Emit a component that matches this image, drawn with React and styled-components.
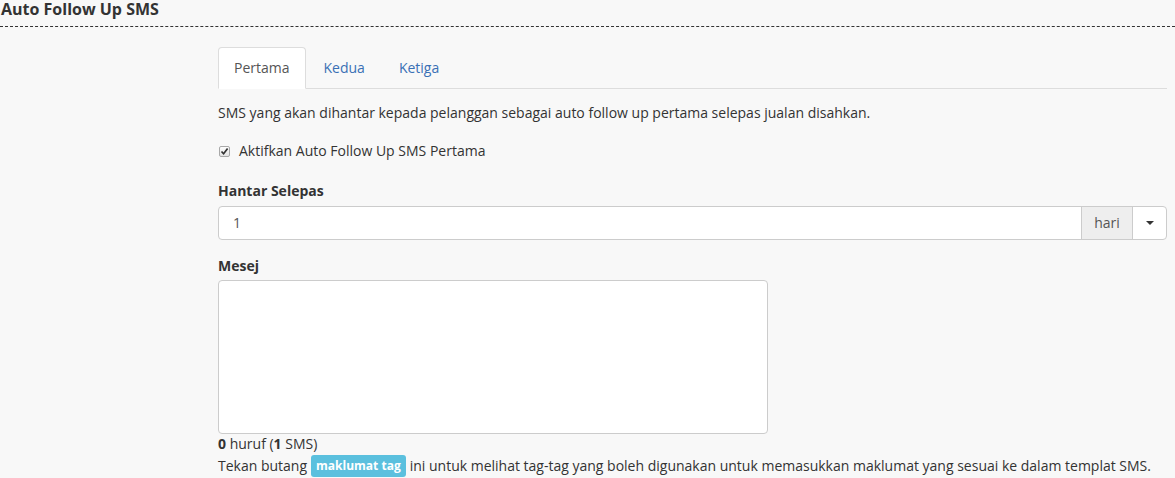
import React from 'react'
import styled, { createGlobalStyle } from 'styled-components';

const GlobalStyle = createGlobalStyle`
html, body {
  margin: 0;
  padding: 0;
  background: #f8f8f8;
}
body {
  font-family: "Open Sans", "Liberation Sans", sans-serif;
  font-size: 14px;
  color: #333;
  line-height: 20px;
}
* { box-sizing: border-box; }
`;

const Page = styled('div')`
width: 1175px;
height: 478px;
overflow: hidden;
`;

const Heading = styled('h3')`
margin: 0;
height: 27px;
padding: 0 0 0 1px;
font-size: 16px;
font-weight: 700;
line-height: 18px;
color: #333;
border-bottom: 1px dashed #333;
`;

const Body = styled('div')`
display: grid;
grid-template-columns: 218px 1fr;
padding-right: 8px;
padding-top: 20px;
`;

const Column = styled('div')`
grid-column: 2;
display: flex;
flex-direction: column;
`;

const Tabs = styled('ul')`
display: flex;
margin: 0;
padding: 0;
list-style: none;
border-bottom: 1px solid #ddd;
height: 42px;
`;

const Tab = styled('li')`
height: 42px;
padding: 10px 15px;
margin-right: 2px;
line-height: 20px;
border: 1px solid ${p => (p.active ? '#ddd' : 'transparent')};
border-bottom-color: transparent;
border-radius: 4px 4px 0 0;
background: ${p => (p.active ? '#fff' : 'transparent')};
color: ${p => (p.active ? '#555' : '#3a70b5')};
cursor: pointer;
`;

const Text = styled('p')`
margin: ${p => p.mt || 0}px 0 0;
line-height: 20px;
`;

const CheckRow = styled('label')`
display: flex;
align-items: center;
gap: 9px;
margin-top: 18px;
height: 20px;
padding-left: 1px;
`;

const CheckBox = styled('span')`
width: 11px;
height: 11px;
border: 1px solid #a8a8a8;
border-radius: 2px;
background: linear-gradient(#fdfdfd, #e4e4e4);
display: flex;
align-items: center;
justify-content: center;
`;

const Label = styled('div')`
font-weight: 700;
margin-top: ${p => p.mt}px;
line-height: 20px;
`;

const InputGroup = styled('div')`
display: flex;
height: 34px;
margin-top: 5px;
border: 1px solid #ccc;
border-radius: 4px;
background: #fff;
overflow: hidden;
`;

const Input = styled('div')`
flex: 1;
padding: 6px 14px;
color: #555;
line-height: 20px;
`;

const Addon = styled('div')`
width: 51px;
background: #eee;
border-left: 1px solid #ccc;
color: #555;
display: flex;
align-items: center;
justify-content: center;
`;

const DropButton = styled('div')`
width: 34px;
border-left: 1px solid #ccc;
display: flex;
align-items: center;
justify-content: center;
`;

const Caret = styled('span')`
width: 0;
height: 0;
border-top: 4px solid #333;
border-left: 4px solid transparent;
border-right: 4px solid transparent;
`;

const TextArea = styled('div')`
width: 550px;
height: 154px;
margin-top: 4px;
background: #fff;
border: 1px solid #ccc;
border-radius: 4px;
`;

const Badge = styled('span')`
display: inline-block;
background: #5bc0de;
color: #fff;
font-size: 12px;
font-weight: 700;
line-height: 22px;
height: 22px;
padding: 0 5px;
border-radius: 3px;
margin: 0 4px 0 4px;
vertical-align: middle;
position: relative;
top: -1px;
`;

export default function App() {
    return (
        <Page>
            <GlobalStyle />
            <Heading>Auto Follow Up SMS</Heading>
            <Body>
                <Column>
                    <Tabs>
                        <Tab active>Pertama</Tab>
                        <Tab>Kedua</Tab>
                        <Tab>Ketiga</Tab>
                    </Tabs>
                    <Text mt={14}>SMS yang akan dihantar kepada pelanggan sebagai auto follow up pertama selepas jualan disahkan.</Text>
                    <CheckRow>
                        <CheckBox>
                            <svg width="9" height="9" viewBox="0 0 9 9">
                                <path d="M1.5 4.5 L3.6 6.8 L7.6 1.6" fill="none" stroke="#333" strokeWidth="1.7" />
                            </svg>
                        </CheckBox>
                        Aktifkan Auto Follow Up SMS Pertama
                    </CheckRow>
                    <Label mt={20}>Hantar Selepas</Label>
                    <InputGroup>
                        <Input>1</Input>
                        <Addon>hari</Addon>
                        <DropButton><Caret /></DropButton>
                    </InputGroup>
                    <Label mt={16}>Mesej</Label>
                    <TextArea />
                    <Text><b>0</b> huruf (<b>1</b> SMS)</Text>
                    <Text mt={2}>
                        Tekan butang<Badge>maklumat tag</Badge>ini untuk melihat tag-tag yang boleh digunakan untuk memasukkan maklumat yang sesuai ke dalam templat SMS.
                    </Text>
                </Column>
            </Body>
        </Page>
    )
}
